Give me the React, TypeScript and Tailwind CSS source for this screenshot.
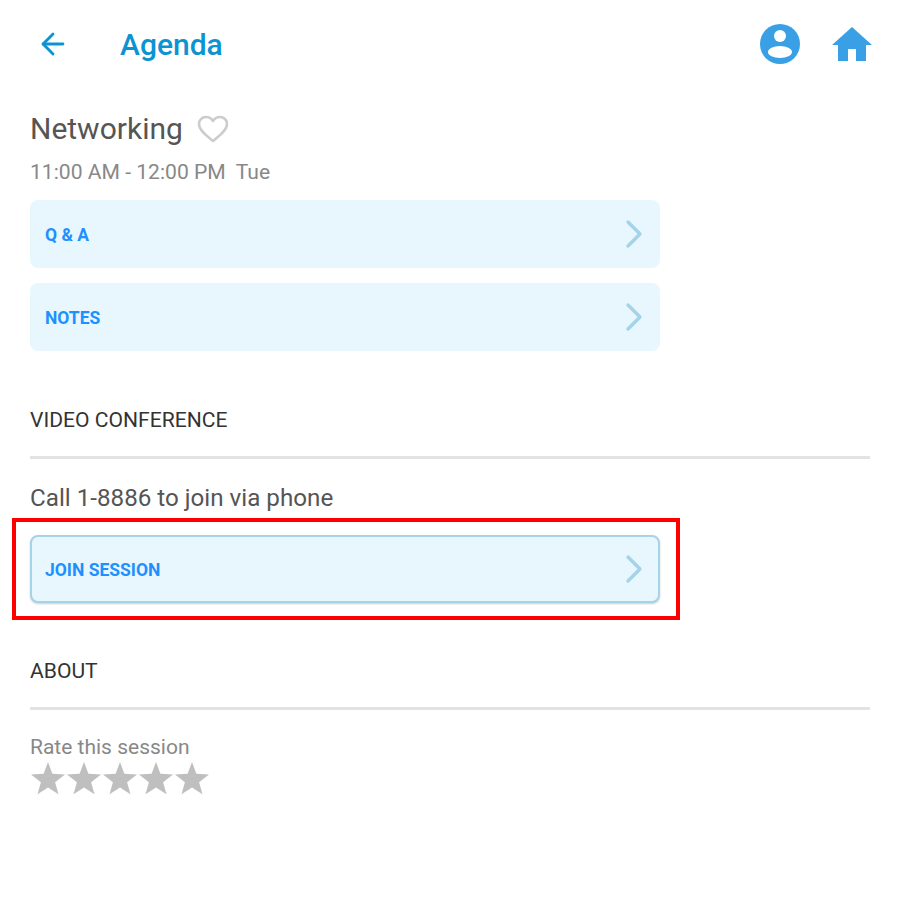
import { ArrowLeft, ChevronRight } from "lucide-react"

function RowButton({ label, focused }: { label: string; focused?: boolean }) {
  return (
    <div
      className={`h-[68px] w-[630px] rounded-lg bg-[#e8f7fd] flex items-center justify-between ${
        focused ? "border-2 border-[#a5d3ea] shadow-[0_1px_2px_rgba(0,0,0,0.2)] pl-[13px]" : "pl-[15px] pr-[2px]"
      }`}
    >
      <span className="pt-[2px] text-[17.5px] font-bold text-[#1e90ff]">{label}</span>
      <ChevronRight className="w-[48px] h-[48px] text-[#a5d3ea]" strokeWidth={1.7} />
    </div>
  )
}

function SectionTitle({ children }: { children: string }) {
  return (
    <div className="border-b-[3px] border-[#e3e3e3] pb-[24px] text-[21.100px] leading-[24px] text-[#333333]">{children}</div>
  )
}

function Star() {
  return (
    <svg viewBox="0 0 36 34" className="w-[36px] h-[34px]">
      <path d="M18 1l4.400 11.800 12.600.6-9.900 7.800 3.400 12.100L18 26.400l-10.500 6.900 3.400-12.100L1 13.400l12.600-.6z" fill="#bfbfbf" />
    </svg>
  )
}

export default function App() {
  return (
    <div className="relative w-[900px] h-[900px] bg-white font-['Roboto',sans-serif] overflow-hidden">
      <header className="h-[88px] flex items-center justify-between pl-[36px] pr-[28px]">
        <div className="flex items-center gap-[50px]">
          <ArrowLeft className="w-[34px] h-[34px] text-[#0c93d2]" strokeWidth={2} />
          <h1 className="text-[30px] font-medium text-[#0c93d2]">Agenda</h1>
        </div>
        <div className="flex items-center gap-[32px]">
          <svg viewBox="0 0 40 40" className="w-[40px] h-[40px]">
            <circle cx="20" cy="20" r="20" fill="#3aa0e6" />
            <circle cx="20" cy="12" r="6" fill="#ffffff" />
            <ellipse cx="20" cy="28" rx="12" ry="6" fill="#ffffff" />
          </svg>
          <svg viewBox="0 0 40 34" className="w-[40px] h-[34px]">
            <path d="M20 0L40 18H34V34H24V22H16V34H6V18H0Z" fill="#3aa0e6" />
          </svg>
        </div>
      </header>

      <main className="px-[30px]">
        <div className="flex items-center gap-[14px] h-[48px] mt-[17px]">
          <h2 className="pb-[2px] text-[30px] text-[#555555]">Networking</h2>
          <svg viewBox="0 0 32 28" className="w-[32px] h-[28px]" fill="none">
            <path
              d="M16 26C10 21 2 15.500 2 9C2 5 5 2 9 2C12 2 14.500 3.500 16 6C17.500 3.500 20 2 23 2C27 2 30 5 30 9C30 15.500 22 21 16 26Z"
              stroke="#cccccc"
              strokeWidth="2.500"
              strokeLinejoin="round"
            />
          </svg>
        </div>
        <p className="mt-[5px] text-[21.100px] leading-[28px] text-[#888888] whitespace-pre">11:00 AM - 12:00 PM  Tue</p>

        <div className="mt-[14px] flex flex-col gap-[15px]">
          <RowButton label="Q & A" />
          <RowButton label="NOTES" />
        </div>

        <div className="mt-[57px]">
          <SectionTitle>VIDEO CONFERENCE</SectionTitle>
        </div>
        <p className="mt-[25px] text-[24.200px] leading-[28px] text-[#555555]">Call 1-8886 to join via phone</p>
        <div className="mt-[23px]">
          <RowButton label="JOIN SESSION" focused />
        </div>

        <div className="mt-[56px]">
          <SectionTitle>ABOUT</SectionTitle>
        </div>
        <p className="mt-[24px] text-[21px] leading-[26px] text-[#888888]">Rate this session</p>
        <div className="flex mt-[1px]">
          <Star />
          <Star />
          <Star />
          <Star />
          <Star />
        </div>
      </main>

      <div className="absolute left-[12px] top-[518px] w-[668px] h-[102px] border-[4px] border-[#ff0000]" />
    </div>
  )
}
